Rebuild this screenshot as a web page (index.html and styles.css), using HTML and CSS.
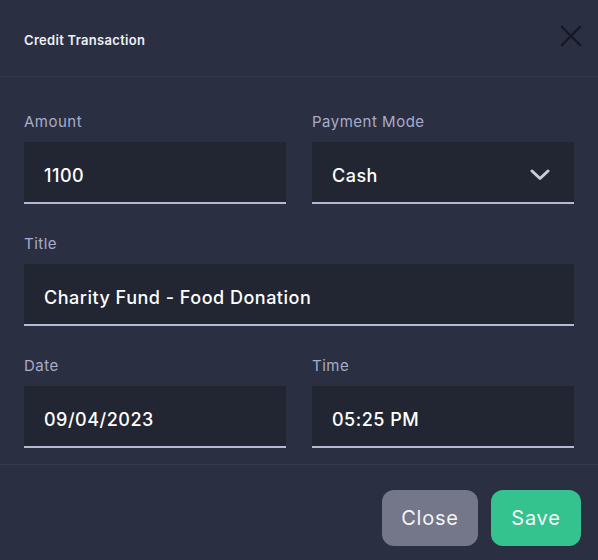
FILE: index.html
```html
<!DOCTYPE html>
<html lang="en">
<head>
<meta charset="utf-8">
<title>Credit Transaction</title>
<link rel="stylesheet" href="styles.css">
</head>
<body>
<div class="modal">
  <header class="modal-header">
    <h1 class="modal-title">Credit Transaction</h1>
    <button class="icon-close" aria-label="Close">
      <svg width="22" height="22" viewBox="0 0 22 22"><path d="M2 2 L20 20 M20 2 L2 20" stroke="#161925" stroke-width="2.4" stroke-linecap="square" fill="none"/></svg>
    </button>
  </header>
  <section class="modal-body">
    <div class="field">
      <label class="label">Amount</label>
      <div class="input">1100</div>
    </div>
    <div class="field">
      <label class="label">Payment Mode</label>
      <div class="input select">
        <span>Cash</span>
        <svg class="chevron" width="20" height="12" viewBox="0 0 20 12"><path d="M2 2 L10 9.5 L18 2" stroke="#c9cce0" stroke-width="3" stroke-linecap="round" stroke-linejoin="round" fill="none"/></svg>
      </div>
    </div>
    <div class="field wide">
      <label class="label">Title</label>
      <div class="input">Charity Fund - Food Donation</div>
    </div>
    <div class="field">
      <label class="label">Date</label>
      <div class="input">09/04/2023</div>
    </div>
    <div class="field">
      <label class="label">Time</label>
      <div class="input">05:25 PM</div>
    </div>
  </section>
  <footer class="modal-footer">
    <button class="btn btn-close">Close</button>
    <button class="btn btn-save">Save</button>
  </footer>
</div>
</body>
</html>
```

FILE: styles.css
```css
html, body {
  margin: 0;
  padding: 0;
}
body {
  background: #2b2f42;
  font-family: "Inter", "Noto Sans", sans-serif;
  width: 598px;
  height: 560px;
  overflow: hidden;
}
.modal {
  display: flex;
  flex-direction: column;
}
.modal-header {
  height: 77px;
  border-bottom: 1px solid #353a50;
  display: flex;
  align-items: center;
  justify-content: space-between;
  padding: 0 16px 0 24px;
  box-sizing: border-box;
}
.modal-title {
  margin: 3px 0 0;
  font-size: 13px;
  font-weight: 600;
  letter-spacing: 0.3px;
  color: #eef0f6;
}
.icon-close {
  background: none;
  border: 0;
  padding: 0;
  margin-top: -5px;
  width: 22px;
  height: 22px;
  display: block;
}
.icon-close svg { display: block; }
.modal-body {
  display: grid;
  grid-template-columns: 262px 262px;
  column-gap: 26px;
  row-gap: 28px;
  padding: 33px 24px 16px;
  border-bottom: 1px solid #353a50;
}
.field {
  display: flex;
  flex-direction: column;
  gap: 9px;
}
.field.wide { grid-column: 1 / 3; }
.label {
  font-size: 15px;
  line-height: 22px;
  padding-top: 1px;
  letter-spacing: 0.5px;
  color: #a8abc9;
}
.input {
  height: 62px;
  box-sizing: border-box;
  background: #222633;
  border-bottom: 2px solid #b5b9d2;
  padding: 6px 20px 0;
  display: flex;
  align-items: center;
  font-size: 18px;
  font-weight: 500;
  letter-spacing: 0.5px;
  color: #ffffff;
}
.select {
  justify-content: space-between;
  padding-right: 24px;
}
.chevron { display: block; margin-top: 0; }
.modal-footer {
  display: flex;
  justify-content: flex-end;
  gap: 13px;
  padding: 25px 17px 0;
}
.btn {
  height: 56px;
  border: 0;
  border-radius: 12px;
  font-family: inherit;
  font-size: 20px;
  letter-spacing: 0.8px;
  color: #f4f5f8;
  padding: 0;
}
.btn-close { width: 96px; background: #737789; }
.btn-save { width: 90px; background: #34c38f; }
```
